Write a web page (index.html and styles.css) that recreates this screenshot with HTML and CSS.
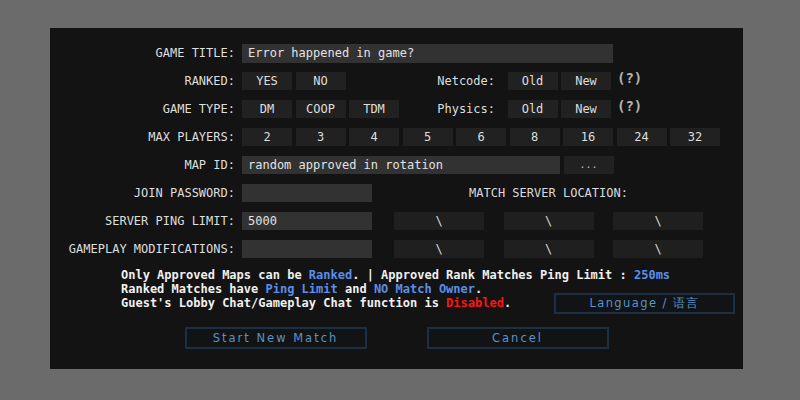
FILE: index.html
```html
<!DOCTYPE html>
<html>
<head>
<meta charset="utf-8">
<link rel="stylesheet" href="styles.css">
</head>
<body>
<div class="panel">
  <div class="rows">
    <div class="row">
      <div class="label">GAME TITLE:</div>
      <div class="field title">Error happened in game?</div>
    </div>
    <div class="row">
      <div class="label">RANKED:</div>
      <div class="group">
        <div class="btn">YES</div>
        <div class="btn">NO</div>
      </div>
      <div class="sublabel">Netcode:</div>
      <div class="btn">Old</div>
      <div class="btn">New</div>
      <div class="help">(?)</div>
    </div>
    <div class="row">
      <div class="label">GAME TYPE:</div>
      <div class="group">
        <div class="btn">DM</div>
        <div class="btn">COOP</div>
        <div class="btn">TDM</div>
      </div>
      <div class="sublabel">Physics:</div>
      <div class="btn">Old</div>
      <div class="btn">New</div>
      <div class="help">(?)</div>
    </div>
    <div class="row">
      <div class="label">MAX PLAYERS:</div>
      <div class="btn">2</div>
      <div class="btn">3</div>
      <div class="btn">4</div>
      <div class="btn">5</div>
      <div class="btn">6</div>
      <div class="btn">8</div>
      <div class="btn">16</div>
      <div class="btn">24</div>
      <div class="btn">32</div>
    </div>
    <div class="row">
      <div class="label">MAP ID:</div>
      <div class="field map">random approved in rotation</div>
      <div class="btn dots">...</div>
    </div>
    <div class="row">
      <div class="label">JOIN PASSWORD:</div>
      <div class="field short"></div>
      <div class="side center">MATCH SERVER LOCATION:</div>
    </div>
    <div class="row">
      <div class="label">SERVER PING LIMIT:</div>
      <div class="field short">5000</div>
      <div class="side">
        <div class="loc">\</div>
        <div class="loc">\</div>
        <div class="loc">\</div>
      </div>
    </div>
    <div class="row">
      <div class="label">GAMEPLAY MODIFICATIONS:</div>
      <div class="field short"></div>
      <div class="side">
        <div class="loc">\</div>
        <div class="loc">\</div>
        <div class="loc">\</div>
      </div>
    </div>
  </div>
  <div class="info">
    <div class="line">Only Approved Maps can be <span class="blue">Ranked</span>. | Approved Rank Matches Ping Limit : <span class="blue">250ms</span></div>
    <div class="line">Ranked Matches have <span class="blue">Ping Limit</span> and <span class="blue">NO Match Owner</span>.</div>
    <div class="line last">
      <span>Guest's Lobby Chat/Gameplay Chat function is <span class="red">Disabled</span>.</span>
      <div class="action lang">Language / 语言</div>
    </div>
  </div>
  <div class="actions">
    <div class="action big">Start New Match</div>
    <div class="action big">Cancel</div>
  </div>
</div>
</body>
</html>
```
FILE: styles.css
```css
html, body {
  margin: 0;
  padding: 0;
}
body {
  background: #6b6b6b;
  width: 800px;
  height: 400px;
  overflow: hidden;
  font-family: "DejaVu Sans Mono", "Noto Sans CJK SC", monospace;
  font-size: 12px;
  color: #dedede;
}
.panel {
  margin: 28px 0 0 50px;
  width: 693px;
  height: 341px;
  background: #131313;
  box-sizing: border-box;
  padding-top: 16px;
}
.rows {
  display: flex;
  flex-direction: column;
  gap: 10px;
}
.row {
  display: flex;
  align-items: center;
  height: 18px;
  gap: 3.5px;
}
.label {
  width: 185px;
  margin-right: 3.5px;
  text-align: right;
  white-space: nowrap;
  line-height: 18px;
}
.field {
  height: 18px;
  line-height: 18px;
  background: #323232;
  box-sizing: border-box;
  padding-left: 6px;
  white-space: nowrap;
  color: #e2e2e2;
}
.field.title {
  width: 371px;
  height: 19px;
}
.field.map {
  width: 318px;
}
.field.short {
  width: 130px;
}
.btn {
  width: 50px;
  height: 18px;
  line-height: 18px;
  background: #212121;
  text-align: center;
  flex: none;
  color: #dedede;
}
.btn.dots {
  color: #b8b8b8;
  font-size: 10px;
}
.group {
  display: flex;
  gap: 3.5px;
  width: 158px;
}
.sublabel {
  width: 91.5px;
  text-align: right;
  margin-right: 9px;
}
.help {
  margin-left: 2.5px;
  color: #b4b4b4;
  font-weight: bold;
  font-size: 14px;
  line-height: 14px;
  align-self: flex-start;
  margin-top: -1px;
}
.side {
  width: 309px;
  margin-left: 18.5px;
  display: flex;
  justify-content: space-between;
}
.side.center {
  justify-content: center;
  color: #dadada;
}
.loc {
  width: 90px;
  height: 18px;
  line-height: 18px;
  background: #1f1f1f;
  text-align: center;
  color: #d8d8d8;
}
.info {
  margin-top: 9.5px;
  padding-left: 71px;
  padding-right: 8px;
  font-weight: bold;
  color: #f0f0f0;
}
.line {
  height: 14px;
  line-height: 14px;
  white-space: nowrap;
}
.line.last {
  display: flex;
  align-items: center;
}
.blue {
  color: #5b8ee8;
}
.red {
  color: #ff1212;
}
.action {
  box-sizing: border-box;
  border: 2px solid #1b2f45;
  background: #111315;
  color: #5b93c6;
  font-family: "DejaVu Sans", sans-serif;
  font-weight: normal;
  font-size: 11.5px;
  letter-spacing: 2px;
  text-align: center;
  display: flex;
  align-items: center;
  justify-content: center;
}
.action.lang {
  margin-left: auto;
  width: 181px;
  height: 21px;
  margin-top: -3px;
  margin-bottom: -4px;
  letter-spacing: 1.4px;
}
.actions {
  display: flex;
  justify-content: center;
  gap: 60px;
  margin-top: 17.5px;
}
.action.big {
  width: 182px;
  height: 22px;
}
```
